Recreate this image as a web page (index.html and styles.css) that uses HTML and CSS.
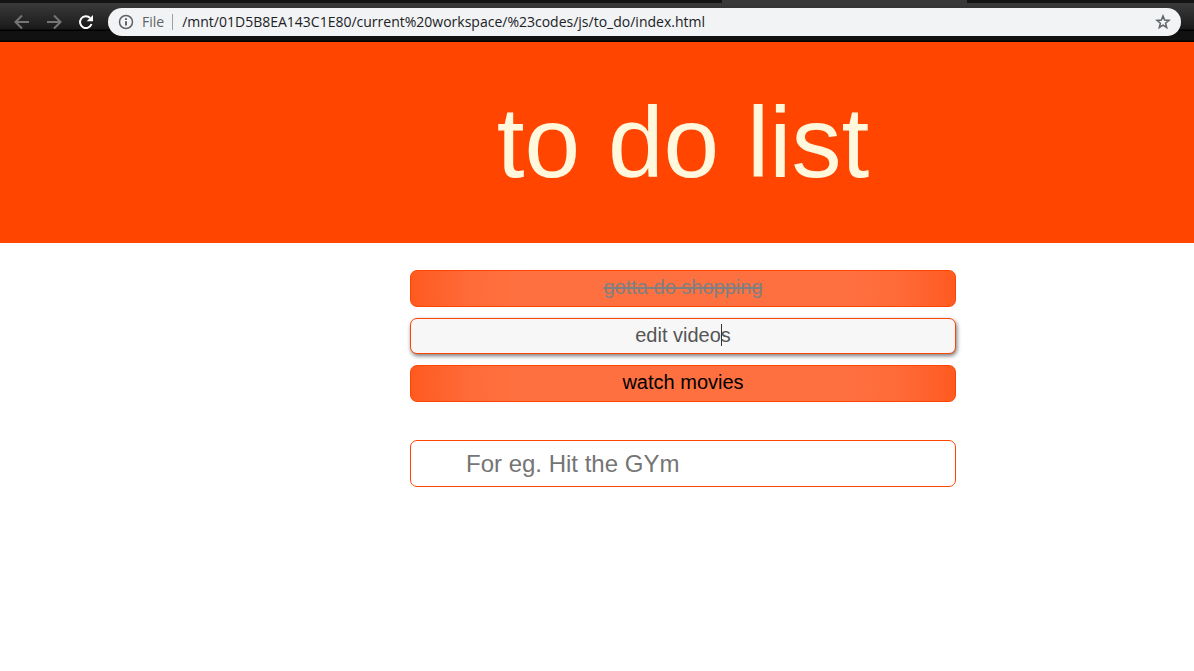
FILE: index.html
```html
<!DOCTYPE html>
<html lang="en">
<head>
<meta charset="utf-8">
<title>to do list</title>
<link rel="stylesheet" href="styles.css">
</head>
<body>
<div class="browser-bar">
  <button class="nav-button dim" aria-label="Back"><svg viewBox="0 0 16 16"><path d="M15 8H2M8 1.500L1.500 8L8 14.500"/></svg></button>
  <button class="nav-button dim" aria-label="Forward"><svg viewBox="0 0 16 16"><path d="M1 8H14M8 1.500L14.500 8L8 14.500"/></svg></button>
  <button class="nav-button" aria-label="Reload"><svg viewBox="0 0 16 16"><path class="reload-arc" d="M13.500 10A5.900 5.900 0 1 1 12.200 4"/><path class="reload-tip" d="M15 1V7.300H8.700Z"/></svg></button>
  <div class="address">
    <svg class="info" viewBox="0 0 16 16"><circle cx="8" cy="8" r="6.500"/><path d="M8 7.200V11.500M8 4.300V6"/></svg>
    <span class="scheme">File</span>
    <input class="url" type="text" aria-label="Address" value="/mnt/01D5B8EA143C1E80/current%20workspace/%23codes/js/to_do/index.html">
    <button class="star" aria-label="Bookmark this page"><svg viewBox="0 0 16 16"><path d="M8 2L9.600 6.100L14 6.400L10.600 9.200L11.700 13.500L8 11.100L4.300 13.500L5.400 9.200L2 6.400L6.400 6.100Z"/></svg></button>
  </div>
</div>
<header class="hero"><h1>to do list</h1></header>
<main class="content">
  <ul class="tasks">
    <li><input class="task done" type="text" aria-label="Task 1" value="gotta do shopping"></li>
    <li class="editing"><input class="task active" type="text" aria-label="Task 2" value="edit videos"><span class="caret"></span></li>
    <li><input class="task" type="text" aria-label="Task 3" value="watch movies"></li>
  </ul>
  <input class="new-task" type="text" aria-label="New task" placeholder="For eg. Hit the GYm">
</main>
</body>
</html>
```
FILE: styles.css
```css
* {
  box-sizing: border-box;
}

body {
  margin: 0;
  background: #fff;
  font-family: "Liberation Sans", Arial, sans-serif;
}

button {
  display: flex;
  padding: 0;
  border: 0;
  background: none;
}

svg {
  display: block;
  width: 16px;
  height: 16px;
  fill: none;
  stroke: currentColor;
}

.browser-bar {
  display: flex;
  align-items: center;
  gap: 16px;
  height: 42px;
  padding: 2px 13px 0 14px;
  background:
    linear-gradient(#141414, #141414) 0 0 / 722px 3px no-repeat,
    linear-gradient(#141414, #141414) 967px 0 / 100% 3px no-repeat,
    linear-gradient(#393939 0, #393939 4px, #1a1a1a 29px, #000 30px, #000 31px, #111 31px, #111 40px, #000 41px);
}

.nav-button {
  color: #fff;
  stroke-width: 2;
}

.nav-button.dim {
  color: #757575;
}

.reload-tip {
  fill: currentColor;
  stroke: none;
}

.address {
  display: flex;
  flex: 1;
  align-items: center;
  height: 28px;
  margin-left: -2px;
  padding: 0 10px;
  border-radius: 14px;
  background: #f1f3f4;
  color: #5f6368;
  font: 14px/20px "Open Sans", "Noto Sans", sans-serif;
}

.info {
  stroke-width: 2;
}

.info circle {
  stroke-width: 1.5;
}

.scheme {
  height: 16px;
  margin-left: 8px;
  padding-right: 8px;
  border-right: 1px solid #9aa0a6;
  line-height: 16px;
}

.url {
  flex: 1;
  min-width: 0;
  padding: 0 0 0 9px;
  border: 0;
  background: none;
  color: #202124;
  font: inherit;
}

.star {
  color: #5f6368;
  stroke-width: 1.5;
}

.hero {
  padding: 43px 0 43px 172px;
  background: #ff4500;
  color: #fff8dc;
  text-align: center;
}

.hero h1 {
  margin: 0;
  font-size: 100px;
  font-weight: 400;
  line-height: 115px;
}

.content {
  display: flex;
  flex-direction: column;
  align-items: center;
  gap: 38px;
  padding: 27px 0 27px 172px;
}

.tasks {
  display: flex;
  flex-direction: column;
  gap: 11px;
  width: 100%;
  max-width: 546px;
  margin: 0;
  padding: 0;
  list-style: none;
}

.task,
.new-task {
  display: block;
  width: 100%;
  border: 1px solid #ff4500;
  border-radius: 7px;
  font-family: inherit;
}

.task {
  height: 37px;
  padding: 0 0 2px;
  background: radial-gradient(circle, #ff7040 0, #ff7040 60%, #ff6b39 78%, #ff5a20 100%);
  color: #000;
  font-size: 20px;
  text-align: center;
}

.task.done {
  color: #808080;
  text-decoration: line-through;
}

.task.active {
  height: 36px;
  background: #f7f7f7;
  box-shadow: 1px 2px 4px #777;
  color: #555;
}

.editing {
  position: relative;
}

.caret {
  position: absolute;
  top: 6px;
  left: calc(50% + 38px);
  width: 1px;
  height: 22px;
  background: #333;
}

.new-task {
  max-width: 546px;
  height: 47px;
  padding: 0 55px;
  font-size: 24px;
}

.new-task::placeholder {
  color: #757575;
}
```
